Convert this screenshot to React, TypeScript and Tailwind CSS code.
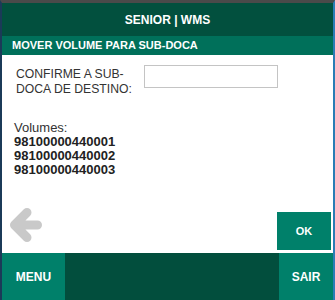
export default function App() {
  const volumes = ['98100000440001', '98100000440002', '98100000440003']

  return (
    <div className="w-[335px] h-[300px] flex flex-col bg-white border-t-[3px] border-t-[#4a4a4a] border-l-2 border-l-[#1b3a58] border-r-2 border-r-[#2a7db5] font-['Liberation_Sans',Arial,sans-serif]">
      <div className="h-[33px] shrink-0 flex items-center justify-center bg-[#02503e] text-white text-[12px] font-bold">
        SENIOR | WMS
      </div>
      <div className="h-[19px] shrink-0 flex items-center pl-[10px] bg-[#00705a] text-white text-[11px] font-bold">
        MOVER VOLUME PARA SUB-DOCA
      </div>

      <div className="flex-1 flex flex-col">
        <div className="flex items-start pt-[10px] pl-[14px]">
          <div className="w-[128px] text-[12.2px] leading-[15px] text-[#333] pt-[2px]">
            CONFIRME A SUB-
            <br />
            DOCA DE DESTINO:
          </div>
          <input
            type="text"
            className="w-[134px] h-[23px] border border-[#c4c4c4] bg-white outline-none"
          />
        </div>

        <div className="pl-[12px] pt-[23px] text-[#222]">
          <div className="text-[13px] leading-[15px] text-[#333]">Volumes:</div>
          {volumes.map((v) => (
            <div key={v} className="text-[13px] leading-[14px] font-bold">
              {v}
            </div>
          ))}
        </div>

        <div className="mt-auto flex items-end justify-between pb-[3px] pr-[2px] pl-[6px]">
          <svg width="38" height="38" viewBox="0 0 38 38" className="mb-[5px]">
            <path
              d="M29.5 18 H6.5 M19 5.5 L6.5 18 L19 30.5"
              fill="none"
              stroke="#c9c9c9"
              strokeWidth="9"
              strokeLinecap="round"
              strokeLinejoin="round"
            />
          </svg>
          <button className="w-[54px] h-[38px] bg-[#00806a] text-white text-[11px] font-bold">OK</button>
        </div>
      </div>

      <div className="h-[47px] shrink-0 flex bg-[#024e3d]">
        <button className="w-[63px] bg-[#00806a] text-white text-[12px] font-bold">MENU</button>
        <div className="flex-1" />
        <button className="w-[54px] bg-[#00806a] text-white text-[12px] font-bold">SAIR</button>
      </div>
    </div>
  )
}
